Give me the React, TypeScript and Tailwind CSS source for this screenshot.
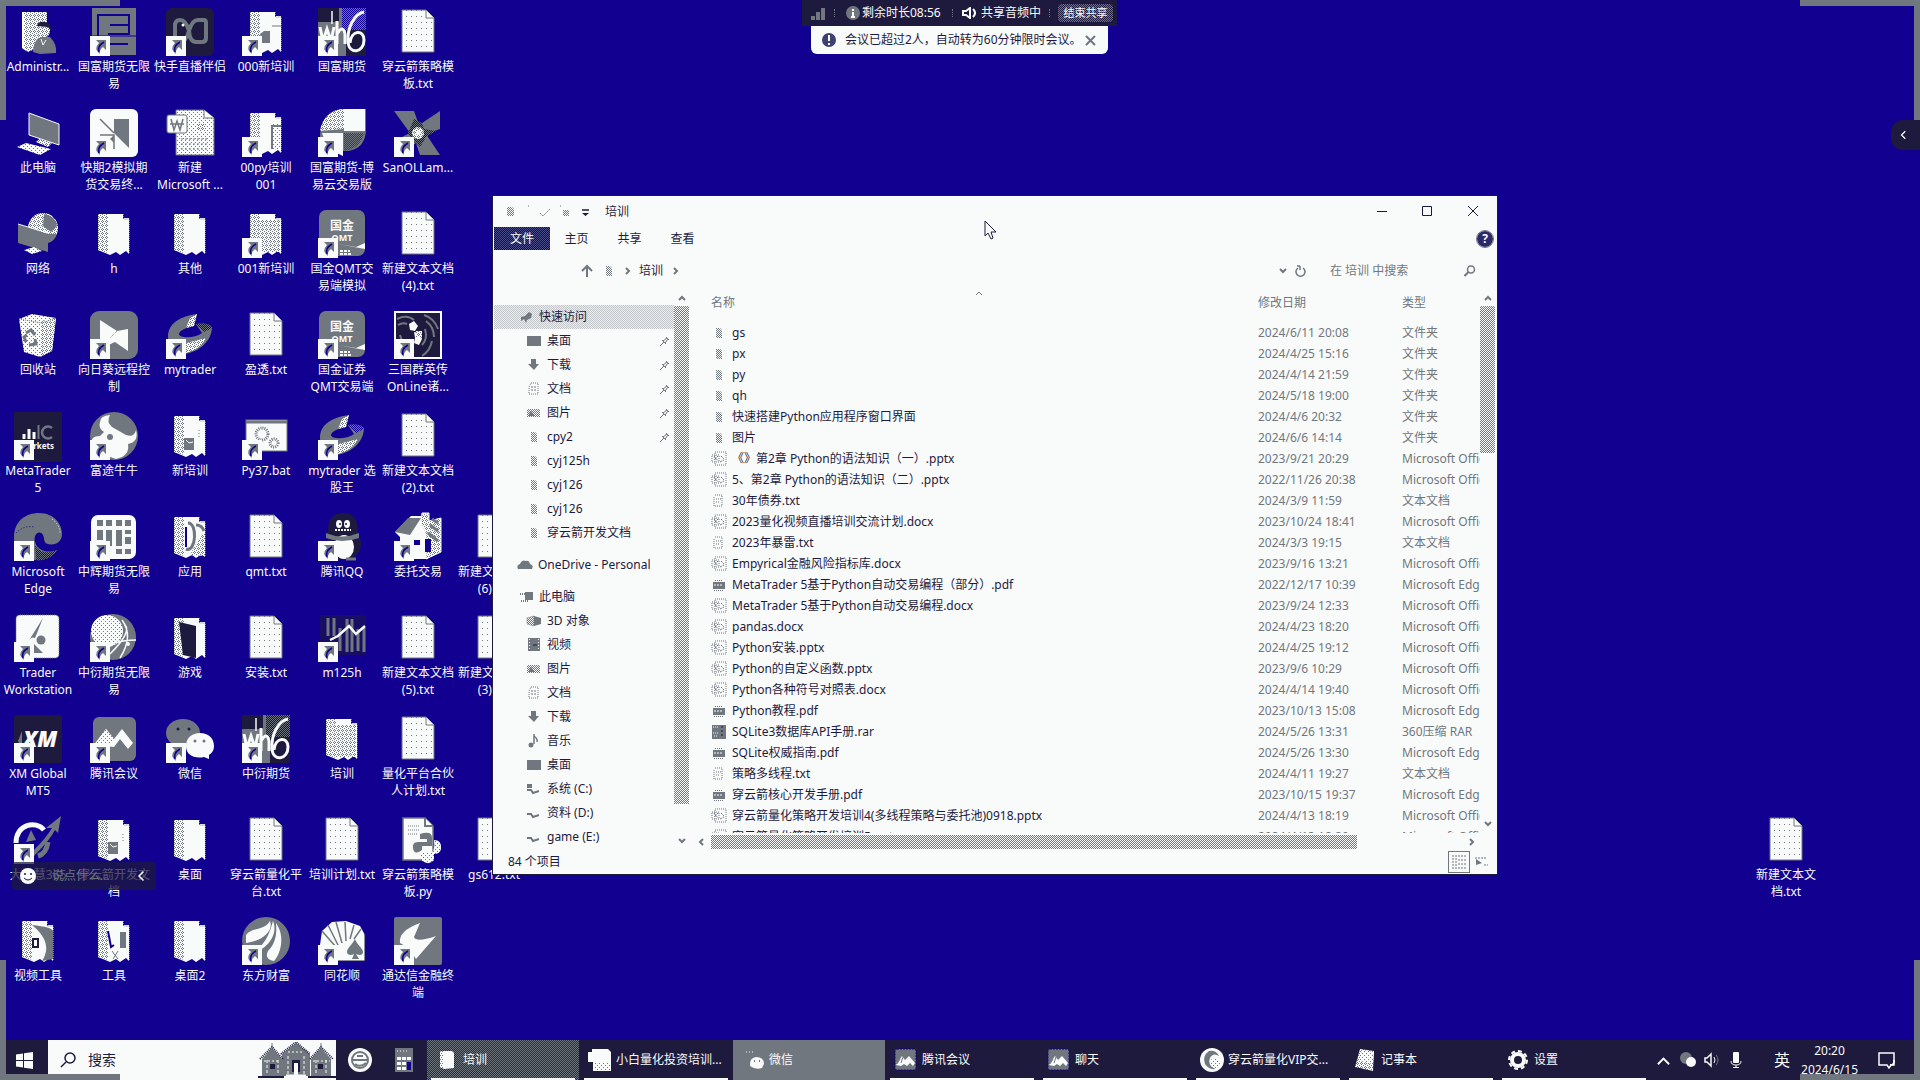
import React from "react";

const W = "#f9fbfa";
const G = "#70777f";
const D = "#1e1a3e";
const B = "#120090";

function Patterns() {
  return (
    <svg className="absolute h-0 w-0" aria-hidden="true">
      <defs>
        <pattern id="light" width="4" height="4" patternUnits="userSpaceOnUse">
          <rect width="4" height="4" fill={W} />
          <rect x="1" y="1" width="1" height="1" fill={G} />
          <rect x="3" y="3" width="1" height="1" fill={G} />
        </pattern>
        <pattern id="mid" width="4" height="4" patternUnits="userSpaceOnUse">
          <rect width="4" height="4" fill={W} />
          <path d="M0 0h1v1H0zM2 1h1v1H2zM0 2h1v1H0zM1 3h1v1H1zM3 3h1v1H3z" fill={G} />
        </pattern>
        <pattern id="half" width="2" height="2" patternUnits="userSpaceOnUse">
          <rect width="2" height="2" fill={W} />
          <rect width="1" height="1" fill={G} />
          <rect x="1" y="1" width="1" height="1" fill={G} />
        </pattern>
        <pattern id="deep" width="2" height="2" patternUnits="userSpaceOnUse">
          <rect width="2" height="2" fill={G} />
          <rect width="1" height="1" fill={B} />
          <rect x="1" y="1" width="1" height="1" fill={B} />
        </pattern>
        <pattern id="sheet" width="5" height="6" patternUnits="userSpaceOnUse">
          <rect width="5" height="6" fill={W} />
          <rect x="2" y="2" width="1" height="1" fill={G} />
        </pattern>
      </defs>
    </svg>
  );
}

const Folder = ({ children }: { children?: React.ReactNode }) => (
  <g>
    <path d="M8 4H33V8H39V44L36 41L30 45L26 42L20 45L8 40Z" fill={W} />
    <path d="M8 4H18V43L8 40Z" fill="url(#mid)" />
    <path d="M8.500 4V40M33.500 4V9H39.500V43" fill="none" stroke={G} strokeDasharray="1 1" />
    {children}
  </g>
);

const Txt = () => (
  <g>
    <path d="M8 2H32L40 10V44H8Z" fill="url(#sheet)" stroke={G} strokeWidth="1" />
    <path d="M32 2V10H40" fill={W} stroke={G} />
  </g>
);

const Wh6 = () => (
  <g>
    <rect width="48" height="48" fill={G} />
    <rect width="21" height="14" fill={D} />
    <rect x="24" width="24" height="22" fill="url(#deep)" />
    <rect x="28" y="22" width="20" height="26" fill={D} />
    <path d="M14 3V16" stroke={W} strokeWidth="1.500" />
    <path d="M2 19L5 33L9 21L13 33L16 19M19 13V36M19 26Q25 16 27 26V36" stroke={W} strokeWidth="3" fill="none" />
    <path d="M46 4C36 6 29 20 30 34C31 47 46 45 46 32C46 21 33 22 32 35" stroke={W} strokeWidth="3" fill="none" />
  </g>
);

const Qmt = () => (
  <g>
    <rect x="1" width="46" height="46" rx="7" fill={G} />
    <text x="24" y="20" fontSize="12" fontWeight="700" fill={W} textAnchor="middle">国金</text>
    <text x="24" y="31" fontSize="9" fontWeight="700" fill={W} textAnchor="middle">QMT</text>
    <path d="M20 34L38 37L47 33V39L36 37Z" fill={W} />
    <path d="M22 41H32M22 44H34" stroke={W} strokeWidth="2" strokeDasharray="3 1" />
  </g>
);

const Mytrader = () => (
  <g>
    <path d="M2 26C2 12 15 5 31 3L28 15C20 17 14 19 13 23C13 27 28 28 36 22L30 13C38 12 45 13 46 17C45 31 33 41 18 43C8 40 2 35 2 26Z" fill={G} />
    <path d="M31 3L28 15L20 17L24 7Z" fill="url(#mid)" />
    <path d="M30 13Q44 11 46 17L38 21Z" fill="url(#deep)" />
    <path d="M20 32L40 27C37 34 29 40 20 42Z" fill="url(#mid)" />
  </g>
);

const icons: Record<string, React.ReactNode> = {
  folder: <Folder />,
  folderDark: <Folder><path d="M13 8L30 12V44L17 41Z" fill={D} /></Folder>,
  folderApp: <Folder><path d="M18 26H28V38H18Z" fill={G} /><path d="M20 28l3 3l4-1" stroke={W} fill="none" /><path d="M33 18v8" stroke={G} strokeDasharray="1 2" /></Folder>,
  folderRing: <Folder><path d="M22 10C32 10 30 40 20 36M30 12Q36 12 38 18" fill="none" stroke={G} strokeWidth="3" /><path d="M20 14v20" stroke={B} strokeWidth="2" /><path d="M24 42Q34 22 39 20V43Z" fill="url(#mid)" /></Folder>,
  folderVideo: <Folder><path d="M18 8Q38 10 39 14V42L28 44Q40 26 18 8Z" fill={G} /><rect x="19" y="22" width="5" height="8" fill="none" stroke={D} strokeWidth="2" /></Folder>,
  folderTools: <Folder><path d="M18 14l3 16l3-2" stroke={B} strokeWidth="2" fill="none" /><rect x="30" y="15" width="6" height="16" fill={G} /><path d="M22 34l6 8M28 34l-5 8" stroke={G} /></Folder>,
  folderPlay: <Folder><path d="M18 26l4-3h6v12h-8z" fill={G} /><path d="M30 18h9" stroke={G} /></Folder>,
  folderMulti: <Folder><path d="M30 14H39V40H30Z" fill="url(#light)" /><path d="M30 16V40M30 17H39" stroke={G} strokeWidth="2" /></Folder>,
  folderDots: <Folder><path d="M18 10H38V42H18Z" fill="url(#mid)" /></Folder>,
  txt: <Txt />,
  wh6: <Wh6 />,
  qmt: <Qmt />,
  mytrader: <Mytrader />,
  admin: (
    <g>
      <path d="M8 4H33V36L14 44L8 40Z" fill="url(#mid)" />
      <path d="M8 4H10V40L14 44L8 40Z" fill={W} />
      <ellipse cx="30" cy="22" rx="6" ry="8" fill="url(#mid)" />
      <path d="M23 18Q24 13 31 14Q38 15 37 23L34 19Z" fill={D} />
      <path d="M19 44Q20 30 28 29L36 29Q43 36 42 45L26 46Z" fill={G} />
      <path d="M27 31l2 6l3-5" stroke={W} fill="none" />
    </g>
  ),
  guofu: (
    <g>
      <rect x="2" y="0" width="44" height="47" fill={G} />
      <path d="M8 30V7H39V26H18M20 17H38M18 36H38" stroke={B} strokeWidth="2" fill="none" />
      <path d="M2 28H46" stroke={B} />
    </g>
  ),
  live: (
    <g>
      <rect width="48" height="48" rx="6" fill={D} />
      <path d="M9 30V18Q9 12 14 12Q20 12 23 23Q26 12 32 12H38Q40 12 40 15V30Q40 34 36 34H30Q24 34 23 23Q20 34 14 34" stroke={G} strokeWidth="4" fill="none" />
      <circle cx="17" cy="17" r="1.500" fill={W} />
    </g>
  ),
  pc: (
    <g>
      <path d="M15 4L45 15V36L15 26Z" fill={G} stroke={W} />
      <path d="M25 30L38 34L34 38L22 33Z" fill="url(#mid)" />
      <path d="M3 38L12 34L37 40L26 46Z" fill="url(#light)" />
    </g>
  ),
  kuaiqi: (
    <g>
      <rect width="48" height="48" rx="6" fill={W} />
      <path d="M24 24V10H39V39Z" fill={G} />
      <path d="M10 10L24 24M10 26H24V40" stroke={G} strokeWidth="1.500" fill="none" />
      <path d="M20 30L24 26V34Z" fill={G} />
    </g>
  ),
  word: (
    <g>
      <path d="M10 1H38L48 9V46H10Z" fill="url(#light)" stroke={G} />
      <path d="M38 1V9H48" fill={W} stroke={G} />
      <rect x="1" y="6" width="20" height="18" rx="2" fill={W} stroke={G} />
      <path d="M5 10L8 21L11 12L14 21L17 10M4 15H18" stroke={G} fill="none" strokeWidth="1.500" />
      <path d="M15 30H43M15 35H43M15 40H43" stroke={G} strokeDasharray="2 2" />
      <rect x="32" y="15" width="8" height="7" fill="url(#mid)" />
    </g>
  ),
  leaf: (
    <g>
      <path d="M2 28C2 10 14 0 28 0H48V20C48 34 40 41 30 42H2Z" fill={G} />
      <path d="M2 22C4 8 14 0 26 0V20Z" fill="url(#mid)" />
      <rect x="26" width="21" height="22" fill={W} />
      <path d="M4 24H25V47L10 40Z" fill={W} />
      <path d="M26 24H46Q42 40 26 42Z" fill="url(#deep)" opacity=".6" />
    </g>
  ),
  pinwheel: (
    <g>
      <path d="M0 2H20L25 16L46 2V20L32 25L46 46H26L22 34L4 46V30L16 24Z" fill={G} />
      <path d="M20 10l8 4l2 6l12 2l-10 6l-6 10l-8-8l-4-6z" fill="url(#deep)" />
      <circle cx="24" cy="24" r="6" fill="url(#mid)" />
      <circle cx="24" cy="24" r="2" fill={W} />
    </g>
  ),
  network: (
    <g>
      <circle cx="29" cy="18" r="15" fill="url(#mid)" />
      <path d="M30 4q12 2 13 12l-6 6l-8-6zM34 24h9q-3 8-9 9z" fill={G} />
      <path d="M4 14L34 24V42L4 33Z" fill={G} />
      <path d="M4 14L34 23" stroke={W} />
      <path d="M10 40L20 37L28 41L18 44Z" fill="url(#light)" />
    </g>
  ),
  bin: (
    <g>
      <path d="M5 8L18 3L42 7L38 40L26 46L10 41Z" fill="url(#light)" />
      <path d="M28 10L42 7L38 40L26 46Z" fill="url(#mid)" />
      <path d="M5 8L28 12L42 7" stroke={G} fill="none" strokeDasharray="1 1" />
      <path d="M12 22l5-3l4 5M21 28l1 5l-7 1M12 31l-2-5l3-2" stroke={G} strokeWidth="3" fill="none" />
    </g>
  ),
  sunlogin: (
    <g>
      <rect width="48" height="48" rx="9" fill={G} />
      <path d="M10 9L27 20L38 18V40L25 31L10 38Z" fill={W} />
      <path d="M27 20L20 27" stroke={G} strokeDasharray="1 1" />
    </g>
  ),
  hero: (
    <g>
      <rect width="48" height="48" fill={W} />
      <rect x="2" y="2" width="44" height="44" fill={D} />
      <path d="M3 8q10-5 17 1M4 14q5-3 9-1M30 4q10 3 14 14M32 10q8 6 8 16M6 24q2 8 8 12M38 30q-2 10-10 15M28 34q6-6 3-16" stroke={G} strokeWidth="2" fill="none" />
      <path d="M15 13l5-3l4 5l-3 5l-5-1zM20 21l6 1l2 6l-3 6l-5-2l1-5z" fill={W} />
      <path d="M22 20h6v6h-6z" fill="url(#mid)" />
    </g>
  ),
  ic: (
    <g>
      <rect width="48" height="50" fill={D} />
      <path d="M10 22v5M15 17v10M20 20v7" stroke={W} strokeWidth="3" />
      <path d="M24.500 13v14" stroke={G} strokeWidth="2" />
      <path d="M38 16a6 6 0 1 0 0 9" stroke={G} strokeWidth="2.500" fill="none" />
      <text x="40" y="37" fontSize="8" fontWeight="700" fill={W} textAnchor="end">Markets</text>
    </g>
  ),
  futu: (
    <g>
      <circle cx="24" cy="24" r="24" fill={G} />
      <path d="M10 10Q10 4 20 3Q16 10 22 15L36 23Q44 26 46 18Q49 30 38 32Q40 44 26 47L12 42L2 32Q0 24 10 24L14 20Q8 16 10 10Z" fill={W} />
      <circle cx="20" cy="25" r="3" fill={G} />
    </g>
  ),
  bat: (
    <g>
      <rect x="4" y="8" width="41" height="31" fill={W} stroke={G} />
      <path d="M4 10H45" stroke={G} strokeWidth="3" />
      <circle cx="20" cy="22" r="6" fill="none" stroke={G} strokeWidth="3" strokeDasharray="1 1" />
      <circle cx="32" cy="31" r="4" fill="none" stroke={G} strokeWidth="3" strokeDasharray="1 1" />
    </g>
  ),
  edge: (
    <g>
      <path d="M0 24C0 8 12 0 25 0C40 0 48 11 48 21C48 29 41 33 34 31C29 30 31 26 29 22C25 16 19 22 21 29C23 37 33 41 43 37C38 45 29 48 22 47C8 46 0 36 0 24Z" fill={G} />
      <path d="M21 32C25 40 35 41 43 37C38 45 29 48 22 47Z" fill="url(#deep)" />
      <path d="M2 20Q10 12 20 14" stroke={B} fill="none" strokeDasharray="1 2" />
      <path d="M38 6Q46 12 46 20" stroke={W} fill="none" strokeDasharray="1 2" />
    </g>
  ),
  grid: (
    <g>
      <rect x="1" y="2" width="45" height="44" rx="7" fill={W} />
      <path d="M7 7h6v6H7zM16 7h6v6h-6zM26 7h6v6h-6zM35 7h6v6h-6zM7 17h6v10H7zM16 17h6v16h-6zM26 17h6v16h-6zM35 17h6v4h-6zM35 24h6v7h-6zM26 36h6v5h-6zM35 36h6v5h-6z" fill={G} />
    </g>
  ),
  qq: (
    <g>
      <ellipse cx="26" cy="31" rx="17" ry="16" fill={D} />
      <ellipse cx="26" cy="34" rx="10" ry="12" fill={W} />
      <path d="M10 20Q9 0 25 0Q41 0 40 20Z" fill={D} />
      <path d="M8 20Q24 27 41 20V25Q24 31 8 25Z" fill={G} />
      <ellipse cx="21" cy="11" rx="3" ry="4" fill={W} />
      <ellipse cx="29" cy="11" rx="3" ry="4" fill={W} />
      <circle cx="22" cy="11" r="1" fill={D} />
      <circle cx="28" cy="11" r="1" fill={D} />
      <path d="M17 17H33" stroke={W} strokeWidth="2" strokeDasharray="2 1" />
      <path d="M28 46h10" stroke={G} strokeWidth="3" />
    </g>
  ),
  house: (
    <g>
      <path d="M1 19L17 3H27L32 12L34 24V46H6V24Z" fill={W} />
      <path d="M1 19L14 5H27L16 22Z" fill={G} />
      <path d="M28 0h7v8l12-3v34l-15 7V22l-5-12z" fill="url(#mid)" stroke={W} />
      <path d="M31 26h6v13h-6zM20 27h6v5h-6z" fill={B} />
      <path d="M36 12l8 6M34 20l10 8M38 6l6 4" stroke={G} strokeWidth="3" />
    </g>
  ),
  trader: (
    <g>
      <rect x="2" y="1" width="43" height="43" rx="4" fill={W} stroke={G} strokeDasharray="1 1" />
      <path d="M29 4L21 24Q17 22 14 28Z" fill={G} />
      <circle cx="27" cy="26" r="4.500" fill={G} />
      <path d="M20 30L29 39H20Z" fill={G} />
    </g>
  ),
  globe: (
    <g>
      <circle cx="23" cy="23" r="23" fill={G} />
      <circle cx="17" cy="17" r="16" fill="url(#light)" />
      <path d="M32 6Q44 22 30 44M20 30Q34 26 46 26M36 12Q40 20 20 40" stroke={W} fill="none" strokeWidth="1.500" />
      <circle cx="38" cy="30" r="2" fill={W} />
    </g>
  ),
  chart: (
    <g>
      <rect x="2" y="1" width="46" height="40" fill={D} opacity=".55" />
      <path d="M10 4v18M16 4v18M22 14v23M29 5v33M34 5v33M40 15v22M46 14v24" stroke={G} strokeWidth="3" />
      <path d="M12 26L20 22L31 12L38 20L47 12" stroke={W} strokeWidth="2.500" fill="none" />
    </g>
  ),
  xm: (
    <g>
      <rect width="48" height="48" rx="2" fill={D} />
      <path d="M4 26L8 16V34Z" fill={G} />
      <text x="26" y="32" fontSize="22" fontWeight="900" fontStyle="italic" fill={W} textAnchor="middle">XM</text>
    </g>
  ),
  meeting: (
    <g>
      <rect x="3" y="2" width="43" height="44" rx="6" fill={G} />
      <path d="M4 30L16 14L24 24L32 14L43 28L38 34L30 24L24 32Z" fill={W} />
      <path d="M4 30L16 14L24 24L14 34Z" fill="url(#light)" />
    </g>
  ),
  wechat: (
    <g>
      <ellipse cx="17" cy="18" rx="17" ry="14" fill={G} />
      <circle cx="12" cy="14" r="1.500" fill={D} />
      <circle cx="23" cy="14" r="1.500" fill={D} />
      <path d="M34 18C42 18 48 23 48 31Q48 37 43 40V44L38 42C28 44 20 40 20 31C20 23 26 18 34 18Z" fill={W} />
      <circle cx="29" cy="26" r="1.500" fill={G} />
      <circle cx="38" cy="26" r="1.500" fill={G} />
    </g>
  ),
  daz: (
    <g>
      <path d="M2 27C2 8 22 4 30 14" stroke={W} strokeWidth="5" fill="none" />
      <path d="M12 26L17 14L22 24Z" fill={G} />
      <path d="M20 34Q32 22 38 12L32 12L47 0L44 17L41 14Q36 24 20 40Z" fill={G} />
      <path d="M24 40Q32 38 34 26" stroke={G} strokeWidth="5" fill="none" />
    </g>
  ),
  python: (
    <g>
      <path d="M9 2H31L39 10V44H9Z" fill={W} stroke={G} strokeWidth="1.500" />
      <path d="M31 2V10H39" fill={W} stroke={G} strokeWidth="2" />
      <path d="M14 10H26M14 14H26M14 18H24" stroke={G} strokeDasharray="1 1" />
      <path d="M26 18Q38 14 38 22V30H28V34Q20 40 19 32Q18 26 24 26H33V23H26Z" fill={G} />
      <path d="M40 24Q48 24 47 33Q46 38 40 38V44Q36 49 30 46Q25 44 28 36H38Q41 34 40 24Z" fill="url(#light)" />
    </g>
  ),
  east: (
    <g>
      <circle cx="24" cy="24" r="24" fill={G} />
      <path d="M4 18C10 10 22 14 28 4C32 14 20 24 4 26Z" fill={W} />
      <path d="M31 4C36 16 28 30 12 36C26 24 28 14 31 4Z" fill={W} />
      <path d="M34 6C44 20 38 38 32 44Q22 42 26 34C34 26 35 16 34 6Z" fill={W} />
    </g>
  ),
  cards: (
    <g>
      <path d="M2 28L4 14L14 5L28 4L42 9L47 18V44H14Z" fill={W} />
      <path d="M4 14L18 30M10 8L20 28M18 5L24 26M27 5L28 24M36 8L32 22M43 12L36 22" stroke={G} strokeWidth="1.500" />
      <path d="M47 16V44H20" stroke={D} fill="none" />
      <path d="M37 22C34 28 29 31 29 35C29 38 33 39 36 37L34 42H41L38 37C42 39 45 38 45 35C45 31 39 28 37 22Z" fill={G} />
    </g>
  ),
  tdx: (
    <g>
      <rect width="48" height="48" rx="2" fill={G} />
      <path d="M26 6L20 20Q22 26 42 19L22 42L18 36V46H10Q22 34 6 26Q4 14 26 6Z" fill={W} />
    </g>
  ),
};

type Item = [icon: string, label: string, shortcut?: boolean] | null;

const columns: Item[][] = [
  [
    ["admin", "Administr..."], ["pc", "此电脑"], ["network", "网络"], ["bin", "回收站"], ["ic", "MetaTrader\n5", true],
    ["edge", "Microsoft\nEdge", true], ["trader", "Trader\nWorkstation", true], ["xm", "XM Global\nMT5", true], ["daz", "大智慧365", true], ["folderVideo", "视频工具"],
  ],
  [
    ["guofu", "国富期货无限\n易", true], ["kuaiqi", "快期2模拟期\n货交易终...", true], ["folder", "h"], ["sunlogin", "向日葵远程控\n制", true], ["futu", "富途牛牛", true],
    ["grid", "中辉期货无限\n易", true], ["globe", "中衍期货无限\n易", true], ["meeting", "腾讯会议", true], ["folderApp", "穿云箭开发文\n档"], ["folderTools", "工具"],
  ],
  [
    ["live", "快手直播伴侣", true], ["word", "新建\nMicrosoft ..."], ["folder", "其他"], ["mytrader", "mytrader", true], ["folderApp", "新培训"],
    ["folderRing", "应用"], ["folderDark", "游戏"], ["wechat", "微信", true], ["folder", "桌面"], ["folder", "桌面2"],
  ],
  [
    ["folderPlay", "000新培训", true], ["folderMulti", "00py培训\n001", true], ["folderDots", "001新培训", true], ["txt", "盈透.txt"], ["bat", "Py37.bat", true],
    ["txt", "qmt.txt"], ["txt", "安装.txt"], ["wh6", "中衍期货", true], ["txt", "穿云箭量化平\n台.txt"], ["east", "东方财富", true],
  ],
  [
    ["wh6", "国富期货", true], ["leaf", "国富期货-博\n易云交易版", true], ["qmt", "国金QMT交\n易端模拟", true], ["qmt", "国金证券\nQMT交易端", true], ["mytrader", "mytrader 选\n股王", true],
    ["qq", "腾讯QQ", true], ["chart", "m125h", true], ["folderDots", "培训"], ["txt", "培训计划.txt"], ["cards", "同花顺", true],
  ],
  [
    ["txt", "穿云箭策略模\n板.txt"], ["pinwheel", "SanOLLam...", true], ["txt", "新建文本文档\n(4).txt"], ["hero", "三国群英传\nOnLine诸...", true], ["txt", "新建文本文档\n(2).txt"],
    ["house", "委托交易", true], ["txt", "新建文本文档\n(5).txt"], ["txt", "量化平台合伙\n人计划.txt"], ["python", "穿云箭策略模\n板.py"], ["tdx", "通达信金融终\n端", true],
  ],
  [null, null, null, null, null, ["txt", "新建文本文档\n(6).txt"], ["txt", "新建文本文档\n(3).txt"], null, ["txt", "gs612.txt"]],
];

function DesktopIcon({ item }: { item: Item }) {
  if (!item) return <div className="h-[101px] w-[76px]" />;
  const [icon, label, shortcut] = item;
  return (
    <button type="button" className="flex h-[101px] w-[76px] flex-col items-center gap-0.5">
      <svg width="48" height="48" viewBox="0 0 48 48" className="shrink-0 overflow-visible" aria-hidden="true">
        {icons[icon]}
        {shortcut && (
          <g>
            <rect y="28" width="20" height="20" fill={W} />
            <path d="M6 32H16V42L13 39Q9 42 10 46Q3 41 9 35Z" fill={G} />
            <path d="M9 44Q7 38 14 34" stroke={B} strokeWidth="1.500" fill="none" />
          </g>
        )}
      </svg>
      <span className="whitespace-pre text-center text-xs leading-[17px] text-[#f9fbfa]">{label}</span>
    </button>
  );
}

const MiniFolder = () => <path d="M5 3H9L11 5V13H5Z" fill="url(#half)" />;
const Drive = () => <path d="M1 9H5L7 12L13 10" stroke={G} strokeWidth="2" fill="none" />;

const mini: Record<string, React.ReactNode> = {
  star: <path d="M2 8L6 7L10 3L13 5L12 9L8 11L7 14L5 10L2 12Z" fill={G} />,
  desktop: <path d="M1 3H15V13H1Z" fill={G} />,
  download: <path d="M5 2H10V7H13L8 13L2 7H5Z" fill={G} />,
  doc: <g><path d="M5 2H12V13H3V6Z" fill="none" stroke={G} strokeDasharray="1 1" /><path d="M5 6H11M5 9H11" stroke={G} strokeDasharray="2 1" /></g>,
  pics: <g><rect x="1" y="4" width="13" height="8" fill="url(#half)" /><path d="M2 11L5 6L9 11Z" fill={G} /></g>,
  folder: <MiniFolder />,
  cloud: <path d="M1 12Q-1 8 3 7Q5 2 9 4Q12 3 13 7Q17 8 15 12Z" fill={G} />,
  pc: <g><path d="M6 3H14V11H6Z" fill={G} /><path d="M1 5H6M2 12H10" stroke={G} strokeDasharray="1 1" strokeWidth="2" /></g>,
  cube: <g><path d="M1 5L8 3V13L1 11Z" fill="url(#half)" stroke={G} strokeWidth=".5" /><path d="M8 3L15 5V11L8 13Z" fill={G} /></g>,
  video: <g><path d="M2 1H14V14H2Z" fill={G} /><path d="M3.500 2V13M12.500 2V13" stroke={W} strokeDasharray="1 2" /><path d="M7 8H11" stroke={D} /></g>,
  music: <path d="M8 1V11M8 3Q12 6 11 9" stroke={G} strokeWidth="1.500" fill="none" />,
  driveC: <g><path d="M1 3H6V7H1Z" fill={G} /><Drive /></g>,
  drive: <Drive />,
  office: <g><path d="M4 1H15V14H4Z" fill="none" stroke={G} strokeDasharray="1 1" /><path d="M1 4H8V11H1Z" fill="none" stroke={G} strokeDasharray="1 1" /><path d="M3 5L7 10M7 5L3 9M10 5L13 8M9 11L13 9" stroke={G} strokeDasharray="2 1" /></g>,
  text: <path d="M4 2H11V13H3V4M5 6H10M5 9H9" fill="none" stroke={G} strokeDasharray="1 1" />,
  pdf: <g><path d="M2 5H14V12H2Z" fill={G} /><path d="M4 3.500H12M3 13.500H13" stroke={G} strokeDasharray="1 1" /><path d="M3 8H12" stroke={W} strokeDasharray="2 1" /></g>,
  rar: <g><rect x="1" y="1" width="14" height="14" fill={G} /><path d="M2 3H8M2 9H8M3 12H7" stroke={W} strokeDasharray="1 1" /><path d="M11 2V14" stroke={D} strokeDasharray="2 2" /></g>,
};

function Mini({ name }: { name: string }) {
  return (
    <svg width="16" height="16" viewBox="0 0 16 16" className="shrink-0" aria-hidden="true">
      {mini[name]}
      {name === "music" && <circle cx="5" cy="12" r="2.500" fill={G} />}
    </svg>
  );
}

const quick: [string, string, boolean][] = [
  ["desktop", "桌面", true], ["download", "下载", true], ["doc", "文档", true], ["pics", "图片", true], ["folder", "cpy2", true],
  ["folder", "cyj125h", false], ["folder", "cyj126", false], ["folder", "cyj126", false], ["folder", "穿云箭开发文档", false],
];
const computer: [string, string, boolean][] = [
  ["cube", "3D 对象", false], ["video", "视频", false], ["pics", "图片", false], ["doc", "文档", false], ["download", "下载", false], ["music", "音乐", false],
  ["desktop", "桌面", false], ["driveC", "系统 (C:)", false], ["drive", "资料 (D:)", false], ["drive", "game (E:)", false],
];

function NavRow({ icon, label, pinned }: { icon: string; label: string; pinned: boolean }) {
  return (
    <button type="button" className="flex h-6 w-full shrink-0 items-center gap-1 pl-[33px] pr-1 text-left">
      <Mini name={icon} />
      <span className="flex-1 pl-px">{label}</span>
      {pinned && (
        <svg width="10" height="10" viewBox="0 0 10 10" aria-hidden="true">
          <path d="M0 10L4 6M2 4L6 8M3 5L7 2M5 7L8 3M6 1L9 4" stroke={G} />
        </svg>
      )}
    </button>
  );
}

const OFF = "Microsoft Office";
const EDGE = "Microsoft Edge";
const files: [string, string, string, string][] = [
  ["folder", "gs", "2024/6/11 20:08", "文件夹"],
  ["folder", "px", "2024/4/25 15:16", "文件夹"],
  ["folder", "py", "2024/4/14 21:59", "文件夹"],
  ["folder", "qh", "2024/5/18 19:00", "文件夹"],
  ["folder", "快速搭建Python应用程序窗口界面", "2024/4/6 20:32", "文件夹"],
  ["folder", "图片", "2024/6/6 14:14", "文件夹"],
  ["office", "《》第2章 Python的语法知识（一）.pptx", "2023/9/21 20:29", OFF],
  ["office", "5、第2章 Python的语法知识（二）.pptx", "2022/11/26 20:38", OFF],
  ["text", "30年债券.txt", "2024/3/9 11:59", "文本文档"],
  ["office", "2023量化视频直播培训交流计划.docx", "2023/10/24 18:41", OFF],
  ["text", "2023年暴雷.txt", "2024/3/3 19:15", "文本文档"],
  ["office", "Empyrical金融风险指标库.docx", "2023/9/16 13:21", OFF],
  ["pdf", "MetaTrader 5基于Python自动交易编程（部分）.pdf", "2022/12/17 10:39", EDGE],
  ["office", "MetaTrader 5基于Python自动交易编程.docx", "2023/9/24 12:33", OFF],
  ["office", "pandas.docx", "2024/4/23 18:20", OFF],
  ["office", "Python安装.pptx", "2024/4/25 19:12", OFF],
  ["office", "Python的自定义函数.pptx", "2023/9/6 10:29", OFF],
  ["office", "Python各种符号对照表.docx", "2024/4/14 19:40", OFF],
  ["pdf", "Python教程.pdf", "2023/10/13 15:08", EDGE],
  ["rar", "SQLite3数据库API手册.rar", "2024/5/26 13:31", "360压缩 RAR"],
  ["pdf", "SQLite权威指南.pdf", "2024/5/26 13:30", EDGE],
  ["text", "策略多线程.txt", "2024/4/11 19:27", "文本文档"],
  ["pdf", "穿云箭核心开发手册.pdf", "2023/10/15 19:37", EDGE],
  ["office", "穿云箭量化策略开发培训4(多线程策略与委托池)0918.pptx", "2024/4/13 18:19", OFF],
  ["office", "穿云箭量化策略开发培训5.pptx", "2024/4/13 18:20", OFF],
];

function Chevron({ dir, size = 8, color = G, width = 2 }: { dir: "up" | "down" | "left" | "right"; size?: number; color?: string; width?: number }) {
  const d = { up: "M1 6L4 3L7 6", down: "M1 2L4 5L7 2", left: "M5 1L2 4L5 7", right: "M3 1L6 4L3 7" }[dir];
  return (
    <svg width={size} height={size} viewBox="0 0 8 8" aria-hidden="true">
      <path d={d} stroke={color} strokeWidth={width} fill="none" />
    </svg>
  );
}

const thumb = "bg-[repeating-conic-gradient(#70777f_0_25%,#f9fbfa_0_50%)] bg-[length:2px_2px]";

function Explorer() {
  return (
    <section className="absolute left-[493px] top-[196px] flex h-[678px] w-[1004px] flex-col bg-[#f9fbfa] text-xs text-[#1e1a3e] outline outline-[#1e1a3e]">
      <header className="flex h-[31px] shrink-0 items-center pl-[10px] pr-px">
        <svg width="92" height="16" viewBox="0 0 92 16" aria-hidden="true">
          <path d="M4 3H9L11 5V12H4Z" fill="url(#half)" />
          <path d="M37 9L40 12L47 5M25 2H26M57 2H58" stroke={G} fill="none" strokeDasharray="2 1" />
          <path d="M60 6H66V12H60Z" fill="url(#half)" />
          <path d="M79 6H86" stroke={D} strokeWidth="1.500" />
          <path d="M79 9H86L82.500 12Z" fill={D} />
        </svg>
        <h1 className="flex-1 pl-[10px]">培训</h1>
        <button type="button" aria-label="最小化" className="flex h-full w-[45px] items-center justify-center pb-px">
          <svg width="10" height="10"><path d="M0 5.500H10" stroke={D} /></svg>
        </button>
        <button type="button" aria-label="最大化" className="flex h-full w-[45px] items-center justify-center pb-px">
          <svg width="10" height="10"><path d="M.5.5H9.500V9.500H.5Z" stroke={D} fill="none" /></svg>
        </button>
        <button type="button" aria-label="关闭" className="flex h-full w-[47px] items-center justify-center pb-px">
          <svg width="10" height="10"><path d="M0 0L10 10M10 0L0 10" stroke={D} /></svg>
        </button>
      </header>
      <div className="flex h-6 shrink-0 items-start">
        <button type="button" className="ml-px h-[23px] w-14 bg-[repeating-conic-gradient(#4a4d88_0_25%,#120090_0_50%)] bg-[length:2px_2px] text-[#f9fbfa]">文件</button>
        <button type="button" className="h-6 w-[53px]">主页</button>
        <button type="button" className="h-6 w-[53px]">共享</button>
        <button type="button" className="h-6 w-[53px]">查看</button>
        <span className="flex-1" />
        <button type="button" aria-label="帮助" className="mr-1 mt-1 h-4 w-4 rounded-full bg-[#2d2a6c] text-center text-xs font-bold leading-4 text-[#f9fbfa] outline outline-[#70777f]">?</button>
      </div>
      <div className="flex h-[38px] shrink-0 items-center pl-[88px] pt-px">
        <button type="button" aria-label="上移">
          <svg width="12" height="14" viewBox="0 0 12 14"><path d="M6 13V2M1 7L6 2L11 7" stroke={G} strokeWidth="2" fill="none" /></svg>
        </button>
        <span className="flex items-center gap-1.5 pl-2">
          <Mini name="folder" />
          <Chevron dir="right" />
        </span>
        <button type="button" className="px-2">培训</button>
        <Chevron dir="right" />
        <span className="flex-1" />
        <button type="button" aria-label="历史记录" className="mr-2"><Chevron dir="down" /></button>
        <button type="button" aria-label="刷新" className="mr-6">
          <svg width="11" height="12" viewBox="0 0 11 12"><path d="M3 3A4.500 4.500 0 1 0 8 3M5 1V5M2 1H5" stroke={G} strokeWidth="1.500" fill="none" /></svg>
        </button>
        <input aria-label="搜索" placeholder="在 培训 中搜索" className="w-[134px] bg-transparent outline-none placeholder:text-[#70777f] placeholder:opacity-100" />
        <button type="button" aria-label="搜索" className="mr-[21px]">
          <svg width="12" height="12" viewBox="0 0 12 12"><circle cx="7" cy="4.500" r="3.500" fill="none" stroke={G} strokeWidth="1.500" /><path d="M4.500 7L.5 11" stroke={G} strokeWidth="2" /></svg>
        </button>
      </div>
      <div className="flex min-h-0 flex-1">
        <nav className="flex w-[181px] shrink-0 flex-col overflow-hidden pt-4">
          <button type="button" className="ml-px flex h-6 shrink-0 items-center gap-1 bg-[repeating-conic-gradient(#c0c4c7_0_25%,#eef0f0_0_50%)] bg-[length:2px_2px] pl-[25px] text-left">
            <Mini name="star" />
            快速访问
          </button>
          {quick.map(([i, l, p], n) => <NavRow key={n} icon={i} label={l} pinned={p} />)}
          <button type="button" className="flex h-10 shrink-0 items-center gap-[5px] pl-6 text-left"><Mini name="cloud" />OneDrive - Personal</button>
          <button type="button" className="flex h-6 shrink-0 items-center gap-1 pl-[26px] text-left"><Mini name="pc" />此电脑</button>
          {computer.map(([i, l, p], n) => <NavRow key={n} icon={i} label={l} pinned={p} />)}
        </nav>
        <div className="flex w-[15px] shrink-0 flex-col items-center">
          <div className="flex h-[17px] items-center"><Chevron dir="up" /></div>
          <div className={`w-full flex-1 ${thumb}`} />
          <div className="flex h-[45px] items-end pb-1"><Chevron dir="down" /></div>
        </div>
        <div className="flex min-w-0 flex-1 flex-col">
          <div className="flex min-h-0 flex-1">
            <div className="min-w-0 flex-1 overflow-hidden pl-[22px]">
              <table className="w-full table-fixed border-collapse">
                <thead>
                  <tr className="h-[33px] text-left align-top leading-[18px] text-[#70777f]">
                    <th className="w-[547px] p-0 font-normal">
                      <span className="flex items-start">
                        <span className="flex-1 pt-[5px]">名称</span>
                        <span className="mr-[275px]"><Chevron dir="up" width={1} /></span>
                      </span>
                    </th>
                    <th className="w-[144px] p-0 pt-[5px] font-normal">修改日期</th>
                    <th className="p-0 pt-[5px] font-normal">类型</th>
                  </tr>
                </thead>
                <tbody>
                  {files.map(([icon, name, date, type]) => (
                    <tr key={name} className="h-[21px] whitespace-nowrap leading-[21px]">
                      <td className="p-0">
                        <span className="flex items-center gap-[5px]"><Mini name={icon} />{name}</span>
                      </td>
                      <td className="p-0 text-[#70777f]">{date}</td>
                      <td className="overflow-hidden p-0 text-[#70777f]">{type}</td>
                    </tr>
                  ))}
                </tbody>
              </table>
            </div>
            <div className="mr-0.5 flex w-[15px] shrink-0 flex-col items-center">
              <div className="flex h-[17px] items-center"><Chevron dir="up" /></div>
              <div className={`h-[147px] w-full ${thumb}`} />
              <div className="flex flex-1 items-end pb-[5px]"><Chevron dir="down" /></div>
            </div>
          </div>
          <div className="flex h-4 shrink-0 items-end pl-[9px] pr-[22px]">
            <span className="pb-[3px]"><Chevron dir="left" /></span>
            <div className={`ml-[5px] h-[14px] w-[646px] ${thumb}`} />
            <span className="flex-1" />
            <span className="pb-[3px]"><Chevron dir="right" /></span>
          </div>
        </div>
      </div>
      <footer className="flex h-[25px] shrink-0 items-center pl-[15px] pr-2">
        <span className="flex-1">84 个项目</span>
        <button type="button" aria-label="详细信息" className="flex h-[22px] w-[22px] items-center justify-center border border-[#70777f]">
          <svg width="18" height="18"><path d="M3 2V16M6 2V16M8 3H17M8 7H17M8 11H17M8 15H17" stroke={G} strokeDasharray="2 1" /></svg>
        </button>
        <button type="button" aria-label="大图标" className="ml-1">
          <svg width="15" height="12"><path d="M1 2H13M10 9H14" stroke={G} strokeDasharray="2 1" /><path d="M2 3L8 7L2 9Z" fill={G} /></svg>
        </button>
      </footer>
    </section>
  );
}

function MeetingBar() {
  const sep = <span className="h-2 border-l border-dotted border-[#70777f]" />;
  return (
    <div className="absolute left-[802px] top-0 flex flex-col items-center text-xs text-[#f9fbfa]">
      <div className="flex h-[26px] w-[315px] items-center bg-[#1e1a3e] pl-[9px] pr-1">
        <svg width="14" height="13" className="mr-[9px]"><path d="M0 9H4V13H0ZM5 5H9V13H5ZM10 1H14V13H10Z" fill={G} /></svg>
        {sep}
        <svg width="14" height="14" className="ml-[11px] mr-0.5"><circle cx="7" cy="7" r="7" fill={G} /><path d="M7 3V5M7 6V11M5 11H9" stroke={W} strokeWidth="2" /></svg>
        <span className="flex-1 whitespace-nowrap">剩余时长08:56</span>
        {sep}
        <svg width="14" height="12" className="ml-[9px] mr-[5px]"><path d="M1 4V8H4L8 11V1L4 4Z" fill="none" stroke={W} strokeWidth="2" /><path d="M11 2Q15 6 11 10" stroke={W} strokeWidth="2" fill="none" /></svg>
        <span className="mr-2 whitespace-nowrap">共享音频中</span>
        {sep}
        <button type="button" className="ml-2 h-[18px] w-[55px] rounded-sm bg-[repeating-conic-gradient(#70777f_0_25%,#1e1a3e_0_50%)] bg-[length:2px_2px] text-[11px] leading-[18px]">结束共享</button>
      </div>
      <div className="flex h-7 w-[297px] items-center rounded-b-md bg-[#f9fbfa] pl-[11px] pr-3 text-[#1e1a3e]">
        <svg width="14" height="14" className="mr-[9px] shrink-0"><circle cx="7" cy="7" r="7" fill="#3d4070" /><path d="M7 2V8M7 10V12" stroke={W} strokeWidth="2" /></svg>
        <span className="flex-1 whitespace-nowrap">会议已超过2人，自动转为60分钟限时会议。</span>
        <button type="button" aria-label="关闭提示"><svg width="11" height="11"><path d="M1 1L10 10M10 1L1 10" stroke={G} strokeWidth="2" /></svg></button>
      </div>
    </div>
  );
}

const tasks: { icon: string; label: string; state?: "open" | "alert" }[] = [
  { icon: "folder", label: "培训", state: "open" },
  { icon: "word", label: "小白量化投资培训..." },
  { icon: "wechat", label: "微信", state: "alert" },
  { icon: "meeting", label: "腾讯会议" },
  { icon: "meeting", label: "聊天" },
  { icon: "swirl", label: "穿云箭量化VIP交..." },
  { icon: "note", label: "记事本" },
  { icon: "gear", label: "设置" },
];

const taskIcons: Record<string, React.ReactNode> = {
  folder: <g><path d="M5 3H17L19 5V20L9 21L5 19Z" fill={W} /><path d="M5 3H8V20H5Z" fill="url(#mid)" /></g>,
  word: <g><path d="M4 1H20L23 4V23H5V14H0V4H4Z" fill={W} /><path d="M7 14H22V22H7Z" fill="url(#light)" /></g>,
  wechat: <g><path d="M5 4H13" stroke={W} strokeDasharray="1 2" /><path d="M15 9Q23 9 23 16L21 20Q14 22 9 18Q8 10 15 9Z" fill={W} /><path d="M13 13h1M18 13h1" stroke={G} strokeWidth="2" /></g>,
  meeting: <g><rect x="1" y="1" width="21" height="21" rx="2" fill={G} stroke={B} strokeDasharray="2 1" /><path d="M2 17L8 8L11 12L15 8L21 15L19 18L16 15L13 18L10 16L7 18Z" fill={W} /><path d="M3 16l3-5M9 9l-2 6" stroke={G} /></g>,
  swirl: <g><circle cx="12" cy="12" r="12" fill={W} /><path d="M9 3Q2 8 5 16Q9 22 15 21Q7 16 10 10Q13 4 19 8Q16 2 9 3Z" fill={G} /><circle cx="15" cy="15" r="5" fill="url(#light)" /></g>,
  note: <g><path d="M7 1L21 3L20 23L2 19Z" fill="url(#mid)" /><path d="M9 2L21 4L20 16L6 13Z" fill="url(#light)" /></g>,
  gear: <g><circle cx="12" cy="12" r="6" fill="none" stroke={W} strokeWidth="4" /><circle cx="12" cy="12" r="9" fill="none" stroke={W} strokeWidth="2" strokeDasharray="4 3" /></g>,
};

function TaskButton({ icon, label, state }: (typeof tasks)[number]) {
  const tone =
    state === "open"
      ? "bg-[repeating-conic-gradient(#70777f_0_25%,#24207a_0_50%)] bg-[length:2px_2px]"
      : state === "alert"
        ? "bg-[#70777f]"
        : "";
  return (
    <button type="button" className={`relative flex h-10 w-[152px] shrink-0 items-center gap-1 pl-2 text-left text-xs text-[#f9fbfa] ${tone}`}>
      <svg width="24" height="24" viewBox="0 0 24 24" className="shrink-0" aria-hidden="true">{taskIcons[icon]}</svg>
      <span className="whitespace-nowrap">{label}</span>
      {state !== "alert" && <span className="absolute inset-x-1 bottom-0 h-0.5 bg-[#f9fbfa]" />}
    </button>
  );
}

function Houses() {
  return (
    <svg width="78" height="36" viewBox="0 0 78 36" className="shrink-0" aria-hidden="true">
      <path d="M4 34V17L14 6L24 17V34ZM24 34V12L38 1L52 12V34ZM53 34V17L63 6L73 17V34Z" fill={G} />
      <path d="M2 17L14 5L25 17M23 12L38 0L52 12M52 17L63 5L75 17" stroke={D} strokeDasharray="1 1" strokeWidth="2" fill="none" />
      <path d="M14 1V7M38 0V4M63 1V7" stroke={G} />
      <path d="M9 18V32M20 18V32M30 14V32M46 14V32M58 18V32M68 18V32" stroke={W} strokeDasharray="3 2" />
      <path d="M12 22H17V27H12ZM34 18H42V30H34ZM60 22H65V27H60Z" fill={D} />
      <path d="M36 21H40V36H36Z" fill={W} />
      <path d="M30 10H46M6 19H22M55 19H72" stroke={W} strokeDasharray="2 2" />
      <path d="M0 34H26V36H0ZM50 34H78V36H50Z" fill={D} />
      <path d="M28 34H48" stroke={W} strokeWidth="3" />
    </svg>
  );
}

function Taskbar() {
  return (
    <footer className="flex h-10 shrink-0 items-center bg-[#1e1a3e] text-[#f9fbfa]">
      <button type="button" aria-label="开始" className="flex h-full w-12 items-center justify-center">
        <svg width="17" height="17" viewBox="0 0 17 17"><path d="M0 2.500L7 1.500V8H0ZM8 1.300L17 0V8H8ZM0 9H7V15.500L0 14.500ZM8 9H17V17L8 15.700Z" fill={W} /></svg>
      </button>
      <label className="flex h-full w-72 shrink-0 items-center bg-[#f9fbfa] pl-3 text-sm text-[#1e1a3e]">
        <svg width="16" height="16" viewBox="0 0 16 16" className="mr-3 shrink-0"><circle cx="10" cy="6" r="5" fill="none" stroke={D} strokeWidth="1.500" /><path d="M6 10L1 15" stroke={D} strokeWidth="1.500" /></svg>
        <input aria-label="搜索" placeholder="搜索" className="min-w-0 flex-1 bg-transparent outline-none placeholder:text-[#1e1a3e] placeholder:opacity-100" />
        <Houses />
      </label>
      <button type="button" aria-label="浏览器" className="flex w-12 shrink-0 justify-center">
        <svg width="24" height="24"><circle cx="12" cy="12" r="12" fill={W} /><circle cx="12" cy="12" r="8" fill="none" stroke={G} strokeWidth="2" /><path d="M4 12H20M7 16Q12 20 18 15M9 8H15" stroke={G} strokeWidth="2" fill="none" /></svg>
      </button>
      <button type="button" aria-label="计算器" className="mr-[3px] flex w-10 shrink-0 justify-center">
        <svg width="18" height="24"><rect width="18" height="24" fill={G} /><path d="M2 3H14" stroke={W} strokeDasharray="1 2" /><path d="M2 9H6V12H2ZM7 9H11V12H7ZM12 9H16V12H12ZM2 14H6V17H2ZM7 14H11V17H7ZM2 19H6V22H2ZM7 19H11V22H7Z" fill={W} /><path d="M12 14H16V22H12Z" fill={B} /></svg>
      </button>
      <div className="flex flex-1 gap-px overflow-hidden">
        {tasks.map((t) => <TaskButton key={t.label} {...t} />)}
      </div>
      <div className="flex h-full w-[264px] shrink-0 items-center">
        <span className="w-6"><Chevron dir="up" size={15} color={W} width={1} /></span>
        <svg width="16" height="16" className="mr-2"><circle cx="6" cy="6" r="6" fill={G} /><circle cx="11" cy="10" r="5" fill={W} /></svg>
        <svg width="17" height="16" className="mr-[9px]"><path d="M1 6V10H3L7 14V2L3 6Z" fill="none" stroke={W} strokeWidth="1.500" /><path d="M10 5Q12 8 10 11" stroke={W} fill="none" /><path d="M12 3Q16 8 12 13" stroke={G} fill="none" /></svg>
        <svg width="12" height="16" className="mr-8"><rect x="3" width="6" height="11" rx="1" fill={W} /><path d="M1 9Q1 13 6 13Q11 13 11 9M6 13V16M3 15.500H9" stroke={W} fill="none" /></svg>
        <button type="button" className="mr-[11px] text-base">英</button>
        <div className="flex flex-col items-center text-xs leading-[19px]"><span>20:20</span><span>2024/6/15</span></div>
        <button type="button" aria-label="通知" className="ml-5">
          <svg width="18" height="18"><path d="M1 2H16V14H13L11 17L9 14H1Z" fill="none" stroke={W} strokeWidth="1.500" /><path d="M12 14Q17 14 16 9" stroke={W} strokeWidth="2" fill="none" /></svg>
        </button>
      </div>
    </footer>
  );
}

export default function App() {
  return (
    <div className="relative flex h-screen w-full flex-col overflow-hidden bg-[#120090] font-['Noto_Sans','Noto_Sans_CJK_SC',sans-serif]">
      <Patterns />
      <main className="relative min-h-0 flex-1">
        <div className="absolute left-0 top-0 h-[120px] w-[120px] border-l-[6px] border-t-[6px] border-[#70777f]" />
        <div className="absolute right-0 top-0 h-[120px] w-[120px] border-r-[6px] border-t-[6px] border-[#70777f]" />
        <div className="relative flex pt-2">
          {columns.map((col, c) => (
            <div key={c} className="flex flex-col">
              {col.map((item, r) => <DesktopIcon key={r} item={item} />)}
            </div>
          ))}
        </div>
        <div className="absolute right-[96px] top-[816px]"><DesktopIcon item={["txt", "新建文本文\n档.txt"]} /></div>
        <Explorer />
        <MeetingBar />
        <button type="button" aria-label="展开" className="absolute right-0 top-[120px] flex h-[30px] w-[29px] items-center rounded-l-xl bg-[#1e1a3e] pl-2">
          <Chevron dir="left" size={10} color={W} width={1} />
        </button>
        <div className="absolute left-3 top-[862px] flex h-7 w-36 items-center rounded-sm bg-[#1e1a3e]/75 pl-2 pr-2 text-xs text-[#70777f]">
          <svg width="16" height="16" className="shrink-0"><circle cx="8" cy="8" r="8" fill={W} /><circle cx="5" cy="6" r="1" fill={D} /><circle cx="11" cy="6" r="1" fill={D} /><path d="M4 10Q8 14 12 10" stroke={D} fill="none" /></svg>
          <input aria-label="聊天消息" placeholder="说点什么..." className="ml-4 min-w-0 flex-1 bg-transparent outline-none placeholder:text-[#70777f] placeholder:opacity-100" />
          <button type="button" aria-label="收起"><Chevron dir="left" size={12} color={W} width={1} /></button>
        </div>
        <svg width="13" height="20" viewBox="0 0 13 20" className="absolute left-[984px] top-[220px]" aria-hidden="true">
          <path d="M1 1V16L4 13L7 19L9 18L7 12H12Z" fill={W} stroke={D} />
        </svg>
      </main>
      <Taskbar />
      <div className="pointer-events-none absolute bottom-0 left-0 h-[120px] w-[120px] border-b-[6px] border-l-[6px] border-[#70777f]" />
      <div className="pointer-events-none absolute bottom-0 right-0 h-[120px] w-[120px] border-b-[6px] border-r-[6px] border-[#70777f]" />
    </div>
  );
}
